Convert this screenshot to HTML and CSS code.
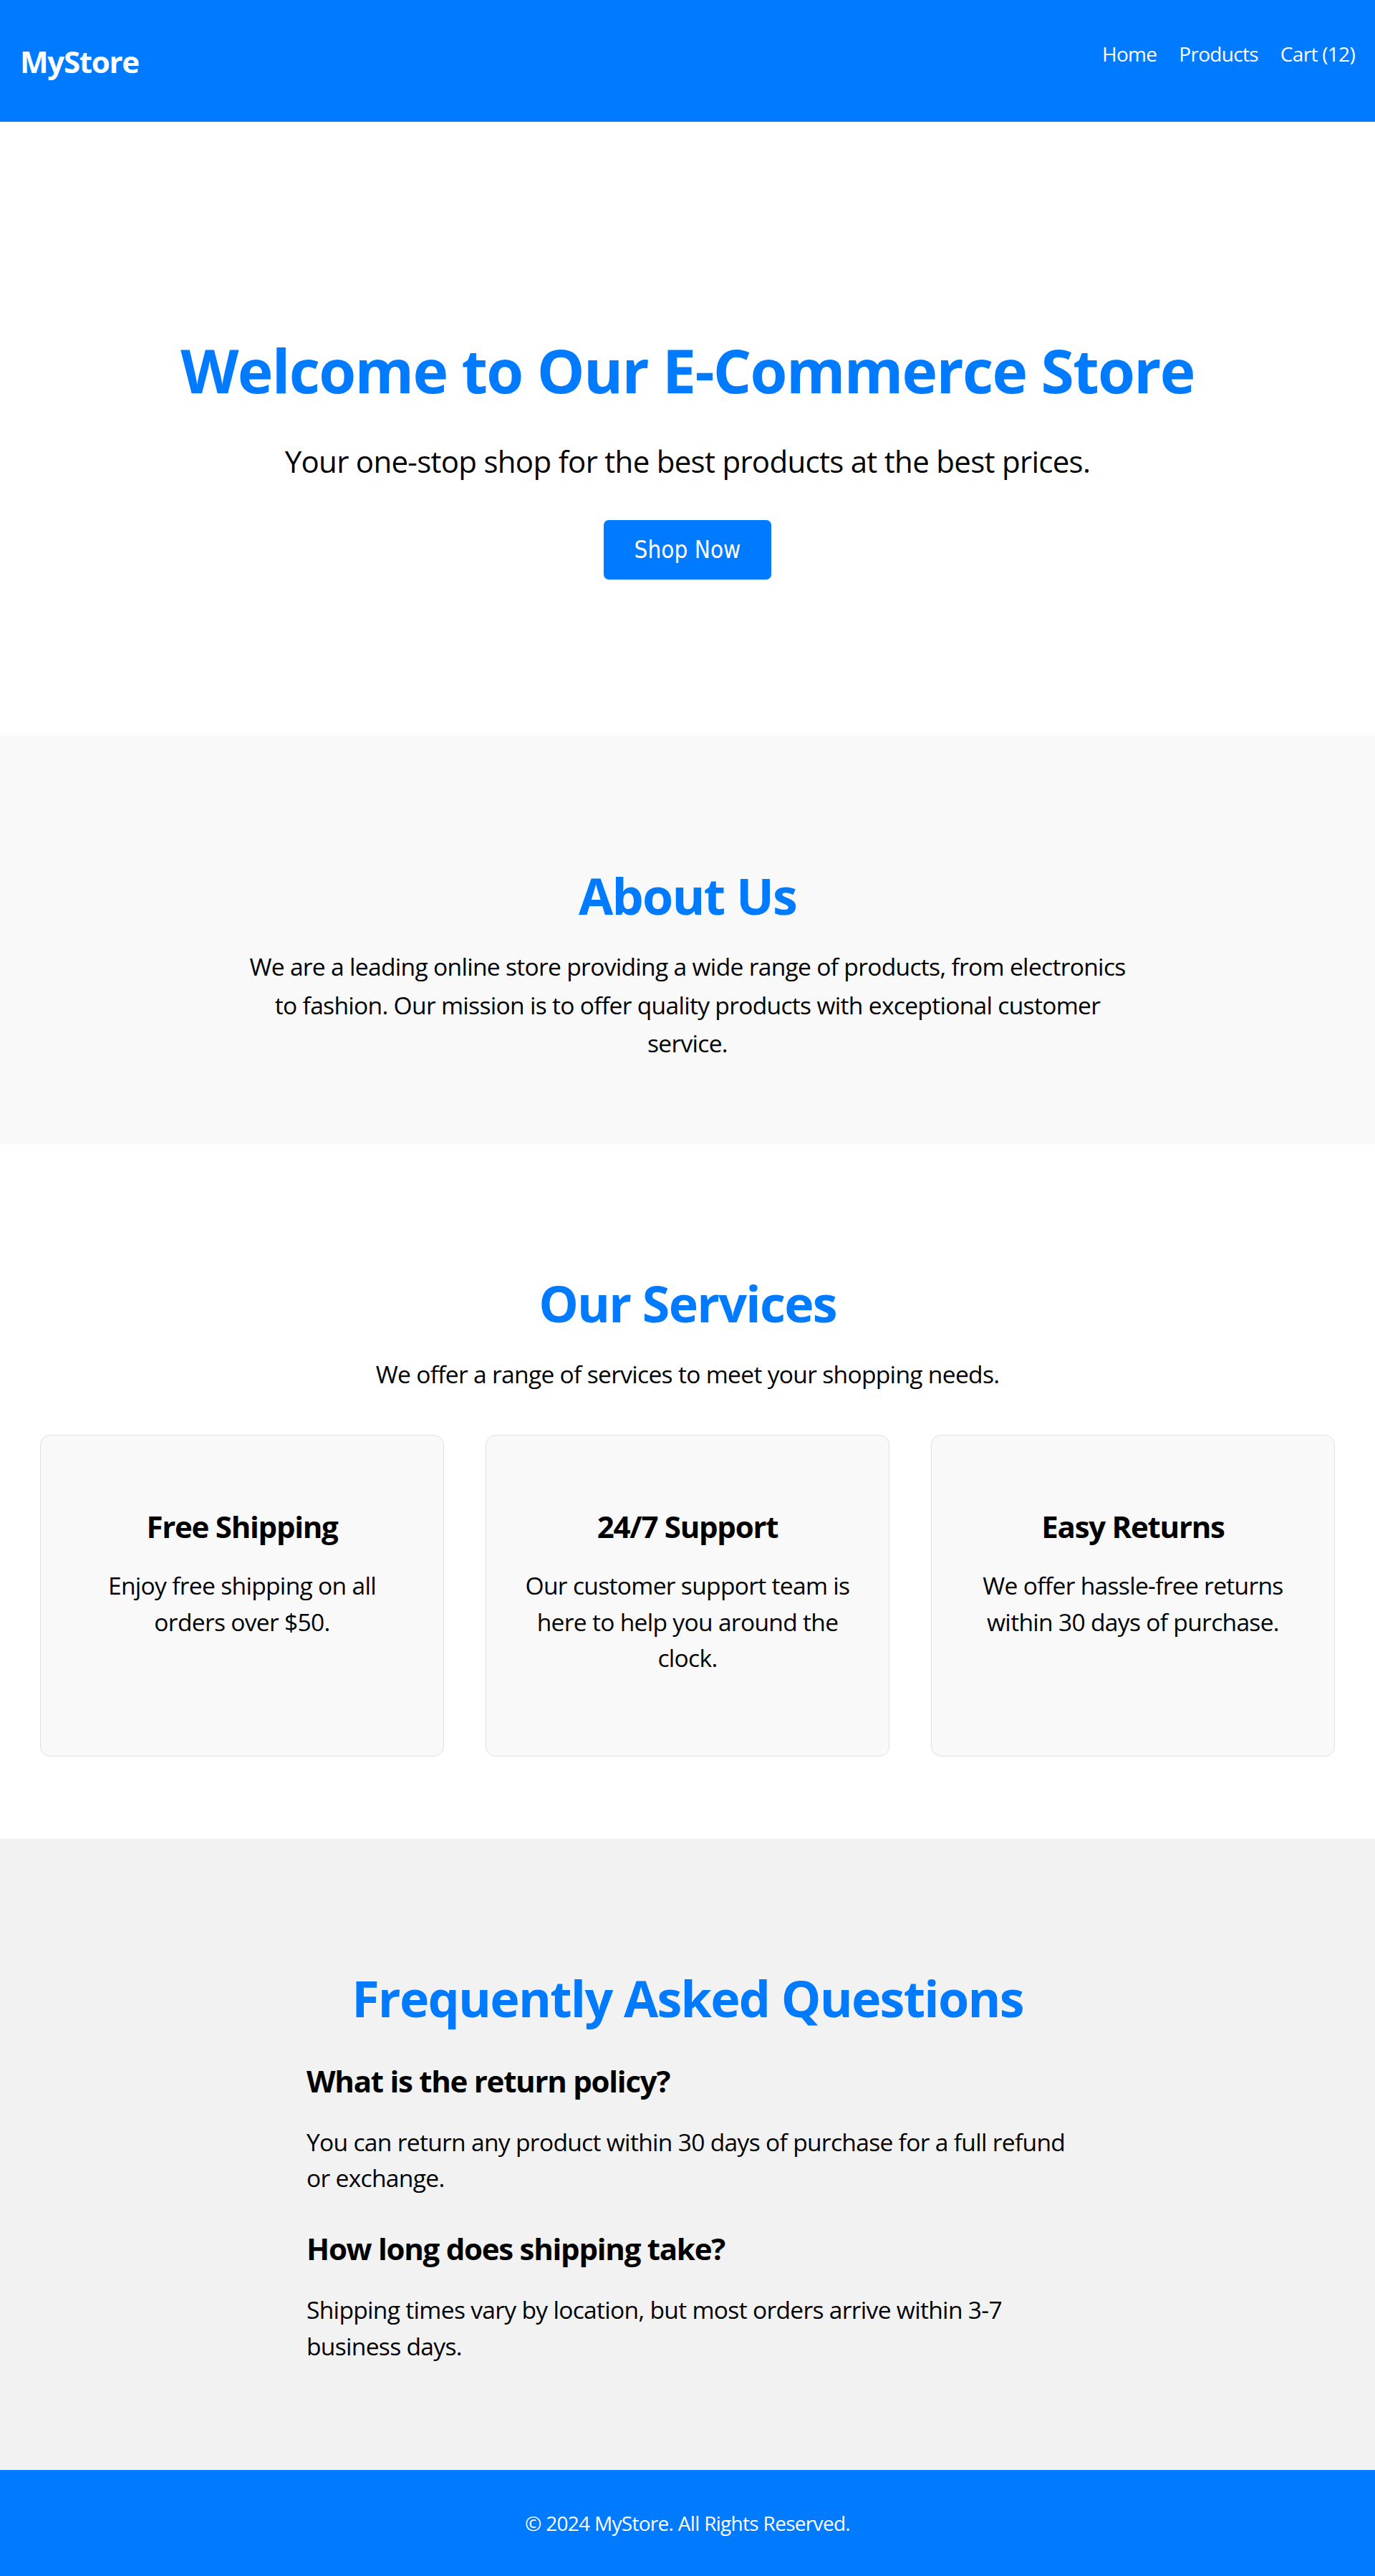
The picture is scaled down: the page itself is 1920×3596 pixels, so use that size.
FILE: index.html
```html
<!DOCTYPE html>
<html lang="en">
<head>
<meta charset="utf-8">
<title>MyStore</title>
<link rel="stylesheet" href="styles.css">
</head>
<body>
<header class="site-header">
  <div class="logo">MyStore</div>
  <nav class="main-nav">
    <a href="#" class="nav-link">Home</a>
    <a href="#" class="nav-link">Products</a>
    <a href="#" class="nav-link">Cart (12)</a>
  </nav>
</header>

<section class="hero">
  <h1 class="hero-title">Welcome to Our E-Commerce Store</h1>
  <p class="hero-text">Your one-stop shop for the best products at the best prices.</p>
  <button class="btn-primary" type="button">Shop Now</button>
</section>

<section class="section about">
  <h2 class="section-title">About Us</h2>
  <p class="about-text">We are a leading online store providing a wide range of products, from electronics to fashion. Our mission is to offer quality products with exceptional customer service.</p>
</section>

<section class="section services">
  <h2 class="section-title">Our Services</h2>
  <p class="section-sub">We offer a range of services to meet your shopping needs.</p>
  <div class="cards">
    <div class="card">
      <h3 class="card-title">Free Shipping</h3>
      <p class="card-text">Enjoy free shipping on all orders over $50.</p>
    </div>
    <div class="card">
      <h3 class="card-title">24/7 Support</h3>
      <p class="card-text">Our customer support team is here to help you around the clock.</p>
    </div>
    <div class="card">
      <h3 class="card-title">Easy Returns</h3>
      <p class="card-text">We offer hassle-free returns within 30 days of purchase.</p>
    </div>
  </div>
</section>

<section class="section faq">
  <h2 class="section-title">Frequently Asked Questions</h2>
  <div class="faq-list">
    <h3 class="faq-q">What is the return policy?</h3>
    <p class="faq-a">You can return any product within 30 days of purchase for a full refund or exchange.</p>
    <h3 class="faq-q">How long does shipping take?</h3>
    <p class="faq-a">Shipping times vary by location, but most orders arrive within 3-7 business days.</p>
  </div>
</section>

<footer class="site-footer">
  <p class="footer-text">&copy; 2024 MyStore. All Rights Reserved.</p>
</footer>
</body>
</html>
```
FILE: styles.css
```css
* {
  box-sizing: border-box;
}

body {
  margin: 0;
  font-family: "Open Sans", "Noto Sans", sans-serif;
  font-size: 28px;
  line-height: 1.5;
  color: #000;
  background: #fff;
  letter-spacing: -0.025em;
}

h1, h2, h3, p {
  margin: 0;
}

/* Header */
.site-header {
  display: flex;
  justify-content: space-between;
  align-items: flex-start;
  height: 170px;
  padding: 0 28px;
  background: #007bff;
  color: #fff;
}

.logo {
  margin-top: 61px;
  font-size: 42px;
  font-weight: 700;
  line-height: 1.2;
  letter-spacing: -0.03em;
}

.main-nav {
  display: flex;
  gap: 31px;
  margin-top: 54px;
  line-height: 42px;
}

.nav-link {
  color: #fff;
  text-decoration: none;
}

/* Hero */
.hero {
  display: flex;
  flex-direction: column;
  align-items: center;
  padding: 297px 20px 218px;
  text-align: center;
}

.hero-title {
  font-size: 84px;
  line-height: 1.2;
  font-weight: 700;
  color: #007bff;
  letter-spacing: -0.02em;
}

.hero-text {
  margin-top: 42px;
  font-size: 42px;
  line-height: 1.6;
}

.btn-primary {
  margin-top: 49px;
  padding: 21px 43px;
  border: none;
  border-radius: 7px;
  background: #007bff;
  color: #fff;
  font-family: "DejaVu Sans Condensed", "Liberation Sans", sans-serif;
  font-size: 33px;
  line-height: 41px;
  letter-spacing: 0;
  cursor: pointer;
}

/* Sections */
.section {
  padding: 181px 0 112px;
  text-align: center;
}

.section-title {
  font-size: 70px;
  line-height: 1.2;
  font-weight: 700;
  color: #007bff;
  letter-spacing: -0.025em;
}

.about {
  background: #f9f9f9;
  padding-bottom: 113px;
}

.about-text {
  max-width: 1240px;
  margin: 31px auto 0;
  font-size: 33.6px;
  line-height: 1.6;
}

.services {
  padding: 180px 0 115px;
}

.section-sub {
  margin-top: 31px;
  font-size: 33.6px;
  line-height: 1.6;
}

.cards {
  display: flex;
  gap: 58px;
  margin-top: 57px;
  padding: 0 56px;
}

.card {
  flex: 1;
  padding: 56px 50px;
  border: 1px solid #e0e0e0;
  border-radius: 14px;
  background: #f9f9f9;
}

.card-title {
  margin-top: 46px;
  font-size: 42px;
  line-height: 1.2;
  font-weight: 700;
  letter-spacing: -0.03em;
}

.card-text {
  margin: 32px 0 55px;
  font-size: 33.6px;
  line-height: 1.5;
}

/* FAQ */
.faq {
  background: #f2f2f2;
  padding: 180px 0 148px;
}

.faq-list {
  max-width: 1064px;
  margin: 0 auto;
  text-align: left;
}

.faq-q {
  margin: 48px 0 35px;
  font-size: 42px;
  line-height: 1.2;
  font-weight: 700;
  letter-spacing: -0.03em;
}

.faq-list .faq-q:first-child {
  margin-top: 49px;
}

.faq-a {
  font-size: 33.6px;
  line-height: 1.5;
}

/* Footer */
.site-footer {
  padding: 53px 20px;
  background: #007bff;
  color: #fff;
  text-align: center;
}

.footer-text {
  font-size: 28px;
  line-height: 42px;
}
```
